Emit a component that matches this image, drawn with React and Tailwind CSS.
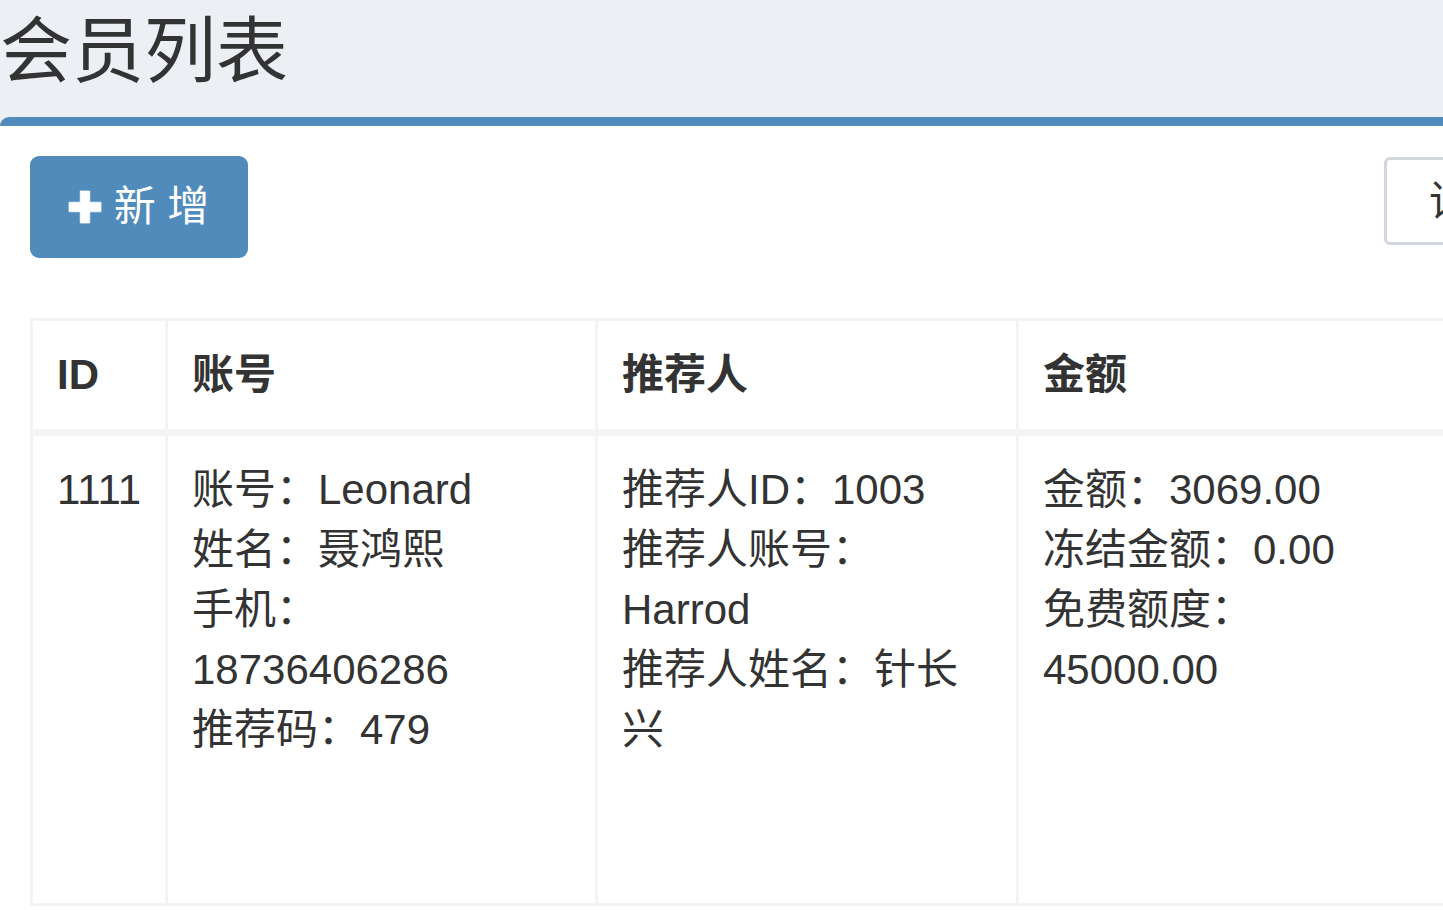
import React from "react";

const member = {
  id: "1111",
  account: ["账号：Leonard", "姓名：聂鸿熙", "手机：", "18736406286", "推荐码：479"],
  referrer: ["推荐人ID：1003", "推荐人账号：", "Harrod", "推荐人姓名：针长", "兴"],
  money: ["金额：3069.00", "冻结金额：0.00", "免费额度：", "45000.00"],
};

function PlusIcon() {
  return (
    <svg width="34" height="34" viewBox="0 0 34 34" className="shrink-0">
      <path
        d="M12.25 1h9.5v11.25H33v9.5H21.75V33h-9.5V21.75H1v-9.5h11.25z"
        fill="#fff"
        stroke="#fff"
        strokeWidth="0.8"
        strokeLinejoin="round"
      />
    </svg>
  );
}

export default function App() {
  const font = "font-['Liberation_Sans','Noto_Sans_CJK_SC',sans-serif]";
  const th = "border-r-[3px] border-b-[7px] border-[#f4f4f4] p-[24px] text-[42px] leading-[60px] font-bold text-[#333]";
  const td = "border-r-[3px] border-b-[3px] border-[#f4f4f4] p-[24px] h-[470px] text-[42px] leading-[60px] text-[#333]";

  return (
    <div className={`w-[1443px] h-[910px] overflow-hidden bg-[#ecf0f5] ${font}`}>
      <h1 className="pt-[15px] mb-[30px] text-[72px] leading-[72px] font-normal text-[#333] whitespace-nowrap">
        会员列表
      </h1>

      <div className="w-[1740px] bg-white border-t-[9px] border-[#518bbb] rounded-t-[9px] p-[30px]">
        <div className="flex justify-between items-start">
          <button className="flex items-center w-[218px] h-[102px] rounded-[9px] bg-[#518bbb] pl-[38px] text-white text-[42px] leading-[60px] whitespace-pre">
            <PlusIcon />
            <span>{" 新 增"}</span>
          </button>
          <div className="mt-px w-[326px] h-[88px] flex items-center border-[3px] border-[#d2d6de] rounded-[6px] pl-[42px] text-[42px] text-[#333] whitespace-nowrap">
            请选择
          </div>
        </div>

        <div className="mt-[60px] grid grid-cols-[135px_430px_421px_1fr] border-l-[3px] border-t-[3px] border-[#f4f4f4]">
          <div className={th}>ID</div>
          <div className={th}>账号</div>
          <div className={th}>推荐人</div>
          <div className={th}>金额</div>

          <div className={td}>{member.id}</div>
          <div className={td}>
            {member.account.map((line) => (
              <div key={line}>{line}</div>
            ))}
          </div>
          <div className={td}>
            {member.referrer.map((line) => (
              <div key={line}>{line}</div>
            ))}
          </div>
          <div className={td}>
            {member.money.map((line) => (
              <div key={line}>{line}</div>
            ))}
          </div>
        </div>
      </div>
    </div>
  );
}
